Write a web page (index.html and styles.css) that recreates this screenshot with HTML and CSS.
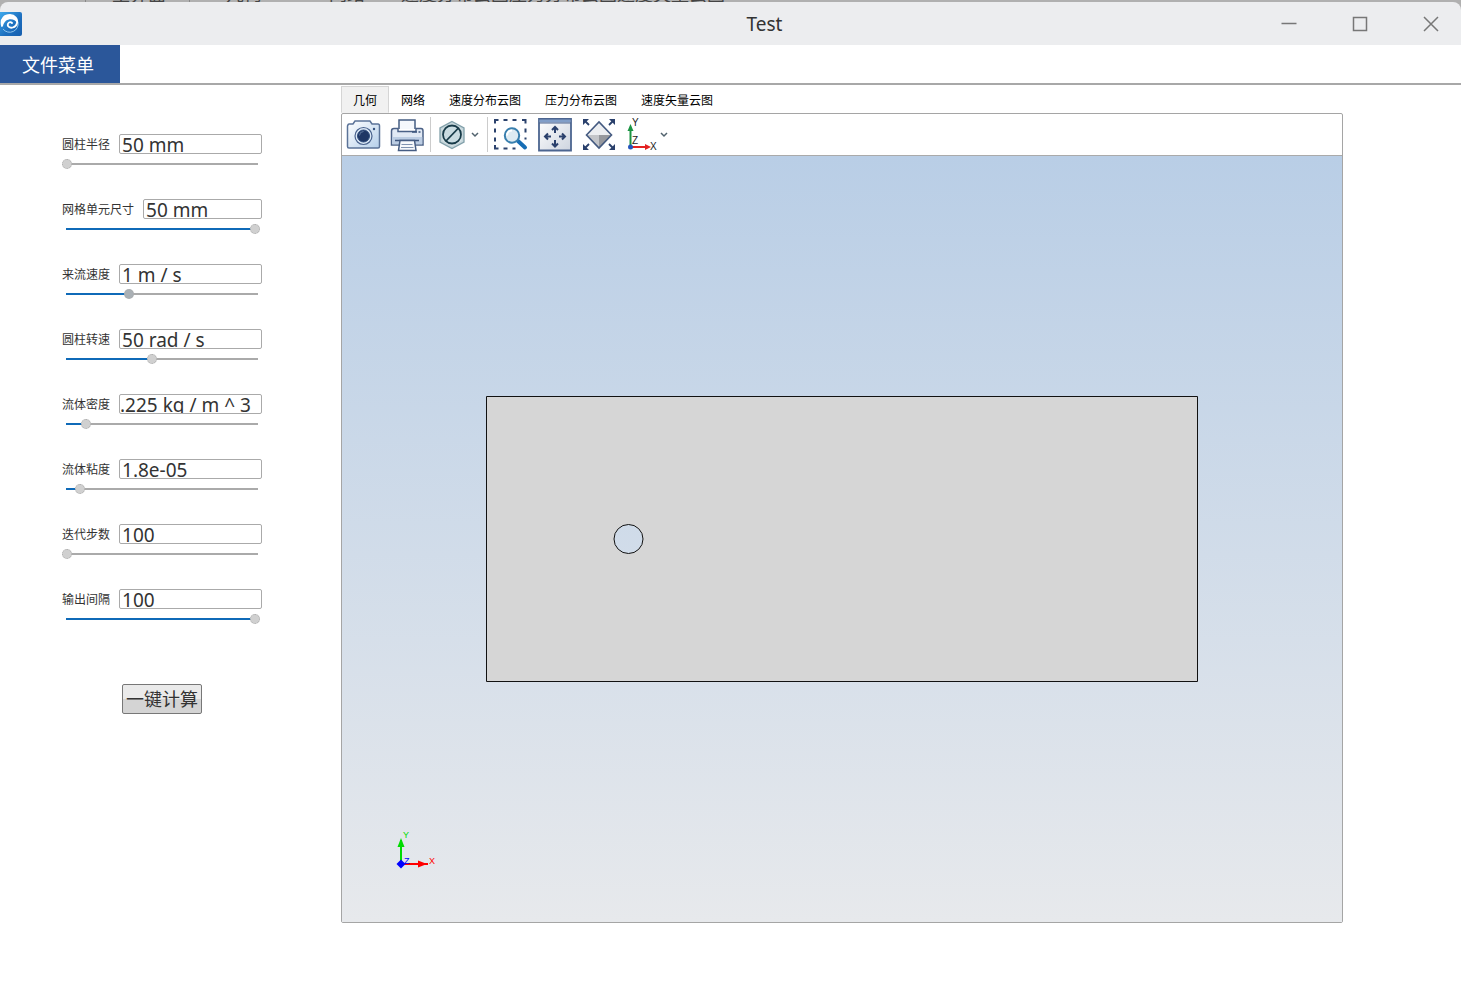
FILE: index.html
```html
<!DOCTYPE html>
<html lang="zh-CN">
<head>
<meta charset="utf-8">
<title>Test</title>
<link rel="stylesheet" href="styles.css">
</head>
<body>
<div class="backdrop" aria-hidden="true">
  <span class="backdrop-tab">主界面</span>
  <span class="backdrop-item">几何</span>
  <span class="backdrop-item backdrop-wide">网络</span>
  <span class="backdrop-item">速度分布云图压力分布云图速度矢量云图</span>
</div>
<header class="titlebar">
  <svg class="logo" viewBox="0 0 22 24" aria-hidden="true">
    <defs><linearGradient id="logoFill" x1="0" y1="0" x2="1" y2="1"><stop offset="0" stop-color="#3fa9ec"/><stop offset=".6" stop-color="#1c6dbd"/><stop offset="1" stop-color="#175fae"/></linearGradient></defs>
    <path d="M0 0H20a2 2 0 0 1 2 2V22a2 2 0 0 1-2 2H0Z" fill="url(#logoFill)"/>
    <path d="M3 17a8.500 8.500 0 0 0 15-7" fill="none" stroke="#8fc4ec"/>
    <path d="M2 14C0 6 5 3 10 3c5 0 8 4 7 8c-1 5-7 6-9 3c-1-3 2-5 4-3" fill="none" stroke="#fff" stroke-width="1.800" stroke-linecap="round"/>
    <path d="M2 14C1 6 5 3 10 3c5 0 8 4 7 8C15 6 5 5 3 14Z" fill="#fff"/>
  </svg>
  <h1 class="title">Test</h1>
  <div class="window-controls">
    <button class="window-button" aria-label="最小化"><svg viewBox="0 0 16 16"><path d="M.5 7.500h15"/></svg></button>
    <button class="window-button" aria-label="最大化"><svg viewBox="0 0 16 16"><path d="M1.500 1.500h13v13h-13z"/></svg></button>
    <button class="window-button" aria-label="关闭"><svg viewBox="0 0 16 16"><path d="M1 1l14 14M15 1L1 15"/></svg></button>
  </div>
</header>
<nav class="menubar"><button class="menu-button">文件菜单</button></nav>
<main class="workspace">
  <form class="parameters">
    <div class="parameter">
      <div class="field"><label for="radius">圆柱半径</label><input class="value" id="radius" value="50 mm"></div>
      <input class="slider" type="range" aria-label="圆柱半径" value="0" style="--v:0">
    </div>
    <div class="parameter">
      <div class="field"><label for="mesh">网格单元尺寸</label><input class="value" id="mesh" value="50 mm"></div>
      <input class="slider" type="range" aria-label="网格单元尺寸" value="100" style="--v:100">
    </div>
    <div class="parameter">
      <div class="field"><label for="speed">来流速度</label><input class="value" id="speed" value="1 m / s"></div>
      <input class="slider slider-active" type="range" aria-label="来流速度" value="33" style="--v:33">
    </div>
    <div class="parameter">
      <div class="field"><label for="spin">圆柱转速</label><input class="value" id="spin" value="50 rad / s"></div>
      <input class="slider" type="range" aria-label="圆柱转速" value="45" style="--v:45">
    </div>
    <div class="parameter">
      <div class="field"><label for="density">流体密度</label><input class="value value-scrolled" id="density" value=".225 kg / m ^ 3"></div>
      <input class="slider" type="range" aria-label="流体密度" value="10" style="--v:10">
    </div>
    <div class="parameter">
      <div class="field"><label for="viscosity">流体粘度</label><input class="value" id="viscosity" value="1.8e-05"></div>
      <input class="slider" type="range" aria-label="流体粘度" value="7" style="--v:7">
    </div>
    <div class="parameter">
      <div class="field"><label for="steps">迭代步数</label><input class="value" id="steps" value="100"></div>
      <input class="slider" type="range" aria-label="迭代步数" value="0" style="--v:0">
    </div>
    <div class="parameter">
      <div class="field"><label for="interval">输出间隔</label><input class="value" id="interval" value="100"></div>
      <input class="slider" type="range" aria-label="输出间隔" value="100" style="--v:100">
    </div>
    <button class="compute" type="button">一键计算</button>
  </form>
  <section class="viewer">
    <div class="tabs" role="tablist">
      <button class="tab tab-selected" role="tab" aria-selected="true">几何</button>
      <button class="tab" role="tab">网络</button>
      <button class="tab" role="tab">速度分布云图</button>
      <button class="tab" role="tab">压力分布云图</button>
      <button class="tab" role="tab">速度矢量云图</button>
    </div>
    <div class="panel">
      <div class="toolbar">
        <button class="tool" aria-label="截图"><svg width="40" height="40" viewBox="0 0 40 40">
          <defs><linearGradient id="cam" x2="1" y2="1"><stop stop-color="#fff"/><stop offset="1" stop-color="#b5cfea"/></linearGradient></defs>
          <path d="M5 10Q5 9 6 9H10L12 6H27L29 9H35Q36.500 9 36.500 11V31.500Q36.500 33 35 33H6Q4.500 33 4.500 31.500V11Z" fill="url(#cam)" stroke="#5b7398" stroke-width="1.500"/>
          <circle cx="20.500" cy="21" r="8.500" fill="#dce9f6" stroke="#48618c" stroke-width="1.200"/><circle cx="20.500" cy="21" r="6" fill="#1f3765" stroke="#2f4c7c"/><path d="M16.500 20.500a4 4 0 0 1 4-4" fill="none" stroke="#60799f"/><circle cx="31" cy="14" r="1.200" fill="#34507e"/>
        </svg></button>
        <button class="tool" aria-label="打印"><svg width="40" height="40" viewBox="0 0 40 40">
          <path d="M12 14V5H28V14" fill="#f5f8fc" stroke="#465d83" stroke-width="1.500"/>
          <path d="M11 13.500H7Q4.500 13.500 4.500 16V30H36V16Q36 13.500 34 13.500H29V16.500H11Z" fill="#e1e9f4" stroke="#4b6186" stroke-width="1.500"/>
          <path d="M5.200 22H35.300V29.300H5.200Z" fill="#bccde3"/><path d="M25 17h5m1.500 0h2M8 25.500h24" stroke="#3d557d" stroke-width="1.500"/>
          <path d="M13 25.500L11.500 35.500H29L27.500 25.500Z" fill="#f7f9fc" stroke="#465d83" stroke-width="1.500"/><path d="M14.500 29.500h11M14 32.500h12.500" stroke="#8093b1"/>
        </svg></button>
        <span class="separator"></span>
        <button class="tool tool-menu tool-display" aria-label="显示方式"><svg width="36" height="40" viewBox="0 0 36 40">
          <path d="M18 6.500L30 13V27L18 33.500L6 27V13Z" fill="#c6d6db" stroke="#82a0aa" stroke-width="1.300"/><path d="M18 9L27.500 14V26L18 31L8.500 26V14Z" fill="#d9e5e9"/>
          <circle cx="18" cy="19.500" r="9" fill="#c9dbe1" stroke="#173a48" stroke-width="1.800"/><path d="M12 26L24.500 13" stroke="#173a48" stroke-width="1.800"/>
        </svg><svg class="chevron" viewBox="0 0 8 8"><path d="M1 2L4 5L7 2"/></svg></button>
        <span class="separator"></span>
        <button class="tool" aria-label="框选缩放"><svg width="40" height="40" viewBox="0 0 40 40">
          <path d="M4 8.500V5H7.500M12.500 5h4m5 0h4M31 5H34.500V8.500M4 13.500v4m0 5v4M34.500 13.500v4m0 5v2M4 30V33.500H7.500M12.500 33.500h4m5 0h3" fill="none" stroke="#2b426d" stroke-width="2"/>
          <path d="M27 26L34 32.500" stroke="#176eb5" stroke-width="4" stroke-linecap="round"/><circle cx="21" cy="20.500" r="7.200" fill="#deebf2" stroke="#397fae" stroke-width="2"/><path d="M16 20.500a5 5 0 0 1 5-5" fill="none" stroke="#fff" stroke-width="2"/>
        </svg></button>
        <button class="tool" aria-label="适应窗口"><svg width="40" height="40" viewBox="0 0 40 40">
          <defs><linearGradient id="fit" x2="1" y2="1"><stop stop-color="#fff"/><stop offset="1" stop-color="#cdd4df"/></linearGradient></defs>
          <path d="M4 4H36V35.500H4Z" fill="url(#fit)" stroke="#4c6590" stroke-width="1.800"/><path d="M4.500 4.500H35.500V7.500H4.500Z" fill="#819ec8"/><path d="M4 8h32" stroke="#4c6590"/>
          <path d="M20 18V12.500M20 25v6M16 21.500H10.500M24 21.500h6M17 15l3-3 3 3M17 28.500l3 3 3-3M13 18.500l-3 3 3 3M27 18.500l3 3-3 3" stroke="#2a406c" stroke-width="2" fill="none"/>
        </svg></button>
        <button class="tool" aria-label="全部显示"><svg width="40" height="40" viewBox="0 0 40 40">
          <path d="M7.500 20L20 7L32.500 20Z" fill="#eceef1"/><path d="M7.500 20H20V33Z" fill="#c3c5c9"/><path d="M20 20V33L32.500 20Z" fill="#96989d"/>
          <path d="M7.500 20L20 7L32.500 20L20 33Z" fill="none" stroke="#445a80" stroke-width="1.600"/>
          <path d="M5 5l5 5M35 5l-5 5M5 34l5-5M35 34l-5-5" stroke="#2a406c" stroke-width="1.800"/><path d="M4 4h6l-6 6ZM36 4h-6l6 6ZM4 35h6l-6-6ZM36 35h-6l6-6Z" fill="#2a406c"/>
        </svg></button>
        <button class="tool tool-menu" aria-label="视图方向"><svg width="36" height="40" viewBox="0 0 36 40">
          <path d="M7.500 32V14" stroke="#1b9443" stroke-width="2"/><path d="M7.500 9l3 7h-6Z" fill="#1b9443"/><path d="M8 32H22" stroke="#e32222" stroke-width="2"/><path d="M28 32l-6-3v6Z" fill="#e32222"/><circle cx="7.500" cy="32" r="2.500" fill="#2455bd"/>
          <g class="axis-label"><text x="9" y="11">Y</text><text x="9" y="29">Z</text><text x="27" y="35">X</text></g>
        </svg><svg class="chevron" viewBox="0 0 8 8"><path d="M1 2L4 5L7 2"/></svg></button>
      </div>
      <div class="viewport">
        <svg class="scene" viewBox="-1 0 1000 766" role="img" aria-label="几何模型">
          <path d="M143.500 240.500H854.500V525.500H143.500ZM300 383a14.500 14.500 0 1 0-29 0a14.500 14.500 0 1 0 29 0Z" fill="#d6d6d6" fill-rule="evenodd" stroke="#111" stroke-width="1"/>
          <path d="M58 708V684" stroke="#00dc00" stroke-width="2"/><path d="M58 682l3.500 9h-7Z" fill="#00dc00"/>
          <path d="M58 708H85" stroke="#f00" stroke-width="2"/><path d="M75 704.500v7l9-3.500Z" fill="#f00"/>
          <path d="M58 703.500l4.500 4.500-4.500 4.500-4.500-4.500Z" fill="#00f"/>
          <g class="triad-label"><text x="60" y="682" fill="#00dc00">Y</text><text x="86" y="708" fill="#f00">X</text><text x="61" y="708" fill="#00f">Z</text></g>
        </svg>
      </div>
    </div>
  </section>
</main>
</body>
</html>
```
FILE: styles.css
```css
* { box-sizing: border-box; }

body {
  margin: 0;
  min-height: 100vh;
  display: flex;
  flex-direction: column;
  background: linear-gradient(#b0b0b0 12px, #fff 12px);
  color: #333;
  font-family: "Noto Sans", "Noto Sans CJK SC", sans-serif;
}

button, input { font-family: inherit; color: inherit; }
button { padding: 0; border: 0; background: none; }
label, .tab, .menu-button, .compute { font-family: "Noto Sans CJK SC", sans-serif; }

/* Sliver of the window behind */
.backdrop {
  flex: none;
  height: 2px;
  overflow: hidden;
  display: flex;
  align-items: flex-end;
  padding-left: 85px;
  color: #444;
  font-size: 18px;
  line-height: 16px;
  white-space: nowrap;
}
.backdrop-tab {
  width: 105px;
  padding-left: 26px;
  border: solid #888;
  border-width: 0 1px;
}
.backdrop-item { margin-left: 36px; }
.backdrop-wide { margin: 0 36px 0 67px; }
.backdrop-wide + .backdrop-item { margin-left: 0; }

.titlebar {
  flex: none;
  height: 43px;
  display: flex;
  align-items: center;
  background: #ecedef;
  border-top-left-radius: 8px;
  border-top-right-radius: 8px;
}
.logo { width: 22px; height: 24px; }
.title {
  flex: 1;
  margin: 0;
  padding-left: 248px;
  text-align: center;
  font-size: 19px;
  font-weight: 400;
  line-height: 24px;
}
.window-controls { display: flex; gap: 11px; }
.window-button {
  display: flex;
  align-items: center;
  justify-content: center;
  width: 60px;
  height: 40px;
}
.window-button svg {
  width: 16px;
  height: 16px;
  fill: none;
  stroke: #777;
  stroke-width: 1.5;
}

.menubar {
  flex: none;
  display: flex;
  background: #fff;
  border-bottom: 2px solid #a8a8a8;
}
.menu-button {
  width: 120px;
  height: 38px;
  padding-right: 4px;
  background: #2b579a;
  color: #fff;
  font-size: 18px;
}

.workspace { flex: 1; display: flex; }

.parameters {
  flex: none;
  width: 341px;
  padding: 49px 79px 0 62px;
  display: flex;
  flex-direction: column;
  gap: 29px;
}
.parameter {
  display: flex;
  flex-direction: column;
  gap: 4px;
}
.field { display: flex; gap: 9px; height: 20px; }
.field label { flex: none; font-size: 12px; line-height: 20px; }
.value {
  flex: 1;
  min-width: 0;
  height: 20px;
  padding: 2px 2px 0;
  border: 1px solid #aaa;
  border-radius: 2px;
  background: #fff;
  font-size: 19px;
  line-height: 20px;
  outline: 0;
}
.value-scrolled { padding-left: 0; padding-right: 0; }

.slider {
  appearance: none;
  width: 198px;
  height: 12px;
  margin: 0;
  background:
    linear-gradient(#0f6ab8, #0f6ab8) 4px center / calc(var(--v) * 1.88px + 1px) 2px no-repeat,
    linear-gradient(#aaa, #aaa) 4px center / calc(100% - 6px) 2px no-repeat;
}
.slider::-webkit-slider-thumb {
  appearance: none;
  width: 10px;
  height: 10px;
  border: 1px dotted #aaa;
  border-radius: 50%;
  background: #d0d0d0;
}
.slider-active::-webkit-slider-thumb { background: #aab0b5; }

.compute {
  align-self: center;
  width: 80px;
  height: 30px;
  margin-top: 30px;
  padding-bottom: 2px;
  border: 1px solid #777;
  border-radius: 2px;
  background: linear-gradient(#eaeaea 50%, #d4d4d4 50%);
  font-size: 18px;
  line-height: 26px;
}

.viewer {
  flex: 1;
  min-width: 0;
  margin: 1px 118px 75px 0;
  display: flex;
  flex-direction: column;
}
.tabs { display: flex; }
.tab {
  height: 27px;
  padding: 0 12px;
  font-size: 12px;
  color: #000;
}
.tab-selected {
  padding: 0 11px;
  border: 1px solid #d5d5d5;
  border-bottom-color: #f1f1f1;
  background: #f1f1f1;
}
.panel {
  flex: 1;
  display: flex;
  flex-direction: column;
  border: 1px solid #a5a5a5;
  border-radius: 2px;
}
.toolbar {
  display: flex;
  align-items: center;
  gap: 4px;
  height: 42px;
  padding-left: 1px;
  border-bottom: 1px solid #aaa;
}
.tool { display: flex; align-items: center; height: 40px; }
.tool svg { display: block; }
.tool-menu { gap: 1px; }
.tool-display { padding-right: 5px; }
.tool .chevron {
  width: 8px;
  height: 8px;
  fill: none;
  stroke: #52636e;
  stroke-width: 1.5;
}
.separator { width: 1px; height: 35px; margin: 0 -1px; background: #ccc; }
.axis-label { font: 10px "Liberation Sans", sans-serif; fill: #222; }

.viewport {
  flex: 1;
  display: flex;
  background: linear-gradient(#b9cee6, #e7e9ec);
}
.scene { flex: 1; min-width: 0; contain: size; }
.triad-label { font: 9px "Liberation Sans", sans-serif; }
```
